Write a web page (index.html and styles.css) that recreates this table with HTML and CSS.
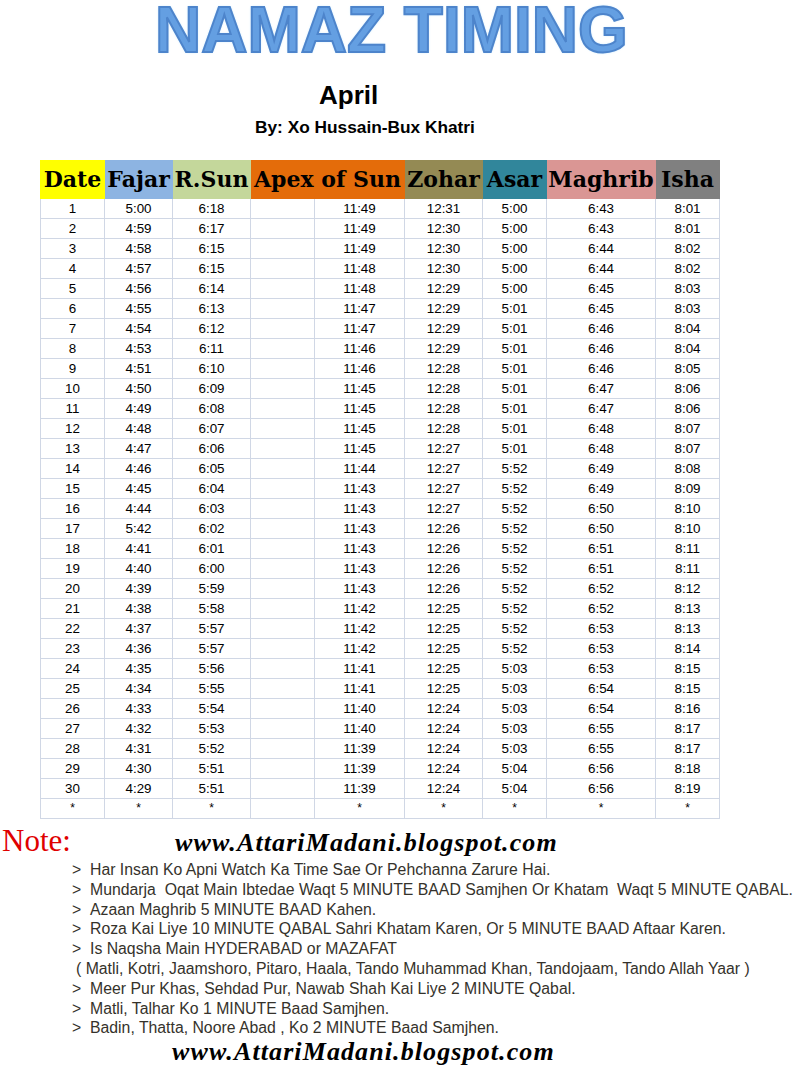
FILE: index.html
```html
<!DOCTYPE html>
<html>
<head>
<meta charset="utf-8">
<link rel="stylesheet" href="styles.css">
</head>
<body>
<div class="page">
  <h1 class="title">NAMAZ TIMING</h1>
  <div class="month">April</div>
  <div class="author">By: Xo Hussain-Bux Khatri</div>

  <table class="timing">
    <colgroup>
      <col class="c-date"><col class="c-fajar"><col class="c-rsun"><col class="c-gap"><col class="c-apex"><col class="c-zohar"><col class="c-asar"><col class="c-maghrib"><col class="c-isha">
    </colgroup>
    <thead>
      <tr>
        <th class="h-date">Date</th>
        <th class="h-fajar">Fajar</th>
        <th class="h-rsun">R.Sun</th>
        <th class="h-apex" colspan="2">Apex of Sun</th>
        <th class="h-zohar">Zohar</th>
        <th class="h-asar">Asar</th>
        <th class="h-maghrib">Maghrib</th>
        <th class="h-isha">Isha</th>
      </tr>
    </thead>
    <tbody>
      <tr><td>1</td><td>5:00</td><td>6:18</td><td></td><td>11:49</td><td>12:31</td><td>5:00</td><td>6:43</td><td>8:01</td></tr>
      <tr><td>2</td><td>4:59</td><td>6:17</td><td></td><td>11:49</td><td>12:30</td><td>5:00</td><td>6:43</td><td>8:01</td></tr>
      <tr><td>3</td><td>4:58</td><td>6:15</td><td></td><td>11:49</td><td>12:30</td><td>5:00</td><td>6:44</td><td>8:02</td></tr>
      <tr><td>4</td><td>4:57</td><td>6:15</td><td></td><td>11:48</td><td>12:30</td><td>5:00</td><td>6:44</td><td>8:02</td></tr>
      <tr><td>5</td><td>4:56</td><td>6:14</td><td></td><td>11:48</td><td>12:29</td><td>5:00</td><td>6:45</td><td>8:03</td></tr>
      <tr><td>6</td><td>4:55</td><td>6:13</td><td></td><td>11:47</td><td>12:29</td><td>5:01</td><td>6:45</td><td>8:03</td></tr>
      <tr><td>7</td><td>4:54</td><td>6:12</td><td></td><td>11:47</td><td>12:29</td><td>5:01</td><td>6:46</td><td>8:04</td></tr>
      <tr><td>8</td><td>4:53</td><td>6:11</td><td></td><td>11:46</td><td>12:29</td><td>5:01</td><td>6:46</td><td>8:04</td></tr>
      <tr><td>9</td><td>4:51</td><td>6:10</td><td></td><td>11:46</td><td>12:28</td><td>5:01</td><td>6:46</td><td>8:05</td></tr>
      <tr><td>10</td><td>4:50</td><td>6:09</td><td></td><td>11:45</td><td>12:28</td><td>5:01</td><td>6:47</td><td>8:06</td></tr>
      <tr><td>11</td><td>4:49</td><td>6:08</td><td></td><td>11:45</td><td>12:28</td><td>5:01</td><td>6:47</td><td>8:06</td></tr>
      <tr><td>12</td><td>4:48</td><td>6:07</td><td></td><td>11:45</td><td>12:28</td><td>5:01</td><td>6:48</td><td>8:07</td></tr>
      <tr><td>13</td><td>4:47</td><td>6:06</td><td></td><td>11:45</td><td>12:27</td><td>5:01</td><td>6:48</td><td>8:07</td></tr>
      <tr><td>14</td><td>4:46</td><td>6:05</td><td></td><td>11:44</td><td>12:27</td><td>5:52</td><td>6:49</td><td>8:08</td></tr>
      <tr><td>15</td><td>4:45</td><td>6:04</td><td></td><td>11:43</td><td>12:27</td><td>5:52</td><td>6:49</td><td>8:09</td></tr>
      <tr><td>16</td><td>4:44</td><td>6:03</td><td></td><td>11:43</td><td>12:27</td><td>5:52</td><td>6:50</td><td>8:10</td></tr>
      <tr><td>17</td><td>5:42</td><td>6:02</td><td></td><td>11:43</td><td>12:26</td><td>5:52</td><td>6:50</td><td>8:10</td></tr>
      <tr><td>18</td><td>4:41</td><td>6:01</td><td></td><td>11:43</td><td>12:26</td><td>5:52</td><td>6:51</td><td>8:11</td></tr>
      <tr><td>19</td><td>4:40</td><td>6:00</td><td></td><td>11:43</td><td>12:26</td><td>5:52</td><td>6:51</td><td>8:11</td></tr>
      <tr><td>20</td><td>4:39</td><td>5:59</td><td></td><td>11:43</td><td>12:26</td><td>5:52</td><td>6:52</td><td>8:12</td></tr>
      <tr><td>21</td><td>4:38</td><td>5:58</td><td></td><td>11:42</td><td>12:25</td><td>5:52</td><td>6:52</td><td>8:13</td></tr>
      <tr><td>22</td><td>4:37</td><td>5:57</td><td></td><td>11:42</td><td>12:25</td><td>5:52</td><td>6:53</td><td>8:13</td></tr>
      <tr><td>23</td><td>4:36</td><td>5:57</td><td></td><td>11:42</td><td>12:25</td><td>5:52</td><td>6:53</td><td>8:14</td></tr>
      <tr><td>24</td><td>4:35</td><td>5:56</td><td></td><td>11:41</td><td>12:25</td><td>5:03</td><td>6:53</td><td>8:15</td></tr>
      <tr><td>25</td><td>4:34</td><td>5:55</td><td></td><td>11:41</td><td>12:25</td><td>5:03</td><td>6:54</td><td>8:15</td></tr>
      <tr><td>26</td><td>4:33</td><td>5:54</td><td></td><td>11:40</td><td>12:24</td><td>5:03</td><td>6:54</td><td>8:16</td></tr>
      <tr><td>27</td><td>4:32</td><td>5:53</td><td></td><td>11:40</td><td>12:24</td><td>5:03</td><td>6:55</td><td>8:17</td></tr>
      <tr><td>28</td><td>4:31</td><td>5:52</td><td></td><td>11:39</td><td>12:24</td><td>5:03</td><td>6:55</td><td>8:17</td></tr>
      <tr><td>29</td><td>4:30</td><td>5:51</td><td></td><td>11:39</td><td>12:24</td><td>5:04</td><td>6:56</td><td>8:18</td></tr>
      <tr><td>30</td><td>4:29</td><td>5:51</td><td></td><td>11:39</td><td>12:24</td><td>5:04</td><td>6:56</td><td>8:19</td></tr>
      <tr class="stars"><td>*</td><td>*</td><td>*</td><td></td><td>*</td><td>*</td><td>*</td><td>*</td><td>*</td></tr>
    </tbody>
  </table>

  <div class="note-head">
    <span class="note-label">Note:</span>
    <span class="site site-top">www.AttariMadani.blogspot.com</span>
  </div>

  <ul class="notes">
    <li><span class="mark">&gt;</span><span class="txt">Har Insan Ko Apni Watch Ka Time Sae Or Pehchanna Zarure Hai.</span></li>
    <li><span class="mark">&gt;</span><span class="txt">Mundarja  Oqat Main Ibtedae Waqt 5 MINUTE BAAD Samjhen Or Khatam  Waqt 5 MINUTE QABAL.</span></li>
    <li><span class="mark">&gt;</span><span class="txt">Azaan Maghrib 5 MINUTE BAAD Kahen.</span></li>
    <li><span class="mark">&gt;</span><span class="txt">Roza Kai Liye 10 MINUTE QABAL Sahri Khatam Karen, Or 5 MINUTE BAAD Aftaar Karen.</span></li>
    <li><span class="mark">&gt;</span><span class="txt">Is Naqsha Main HYDERABAD or MAZAFAT</span></li>
    <li class="sub"><span class="txt">( Matli, Kotri, Jaamshoro, Pitaro, Haala, Tando Muhammad Khan, Tandojaam, Tando Allah Yaar )</span></li>
    <li><span class="mark">&gt;</span><span class="txt">Meer Pur Khas, Sehdad Pur, Nawab Shah Kai Liye 2 MINUTE Qabal.</span></li>
    <li><span class="mark">&gt;</span><span class="txt">Matli, Talhar Ko 1 MINUTE Baad Samjhen.</span></li>
    <li><span class="mark">&gt;</span><span class="txt">Badin, Thatta, Noore Abad , Ko 2 MINUTE Baad Samjhen.</span></li>
  </ul>

  <div class="site site-bottom">www.AttariMadani.blogspot.com</div>
</div>
</body>
</html>
```

FILE: styles.css
```css
html, body {
  margin: 0;
  padding: 0;
  background: #ffffff;
}

.page {
  width: 801px;
  font-family: "Liberation Sans", Arial, sans-serif;
  color: #000;
}

.title {
  margin: 0;
  padding-left: 155px;
  font-family: "Liberation Sans", Arial, sans-serif;
  font-weight: bold;
  font-size: 64px;
  line-height: 60px;
  height: 60px;
  color: #649fe2;
  -webkit-text-stroke: 2px #4d84cb;
  text-shadow: 0 0 1px #9ad6ff, 0 0 3px #a8dcff;
}

.month {
  margin-top: 20px;
  padding-left: 319px;
  font-weight: bold;
  font-size: 26px;
  line-height: 30px;
  height: 30px;
}

.author {
  margin-top: 7px;
  padding-left: 255px;
  font-weight: bold;
  font-size: 17.3px;
  line-height: 20px;
  height: 20px;
}

.timing {
  margin-top: 23px;
  margin-left: 40px;
  border-collapse: collapse;
  table-layout: fixed;
  width: 680px;
}

.c-date { width: 64px; }
.c-fajar { width: 68px; }
.c-rsun { width: 78px; }
.c-gap { width: 64px; }
.c-apex { width: 90px; }
.c-zohar { width: 78px; }
.c-asar { width: 64px; }
.c-maghrib { width: 109px; }
.c-isha { width: 64px; }

.timing th {
  height: 37px;
  padding: 0;
  font-family: "DejaVu Serif", "Liberation Serif", serif;
  font-weight: bold;
  font-size: 22px;
  line-height: 37px;
  text-align: center;
  white-space: nowrap;
  overflow: hidden;
  color: #000;
}

.h-date { background: #ffff00; border: 1px solid #ffff00; }
.h-fajar { background: #8db4e2; border: 1px solid #8db4e2; }
.h-rsun { background: #c4d79b; border: 1px solid #c4d79b; }
.h-apex { background: #e46c0a; border: 1px solid #e46c0a; }
.h-zohar { background: #948a54; border: 1px solid #948a54; }
.h-asar { background: #31869b; border: 1px solid #31869b; }
.h-maghrib { background: #da9694; border: 1px solid #da9694; }
.h-isha { background: #808080; border: 1px solid #808080; text-align: left; padding-left: 2px; }

.timing td {
  height: 19px;
  padding: 0;
  border: 1px solid #d0d7e5;
  font-family: "Liberation Sans", Arial, sans-serif;
  font-size: 13.4px;
  line-height: 19px;
  text-align: center;
  color: #000;
}

.stars td {
  font-size: 12px;
}

.note-head {
  margin-top: 4px;
  display: flex;
  align-items: baseline;
  height: 36px;
}

.note-label {
  padding-left: 2px;
  width: 173px;
  font-family: "Liberation Serif", "Times New Roman", serif;
  font-size: 31px;
  line-height: 36px;
  color: #e00000;
}

.site {
  font-family: "Liberation Serif", "Times New Roman", serif;
  font-style: italic;
  font-weight: bold;
  font-size: 26px;
  letter-spacing: 1.1px;
  color: #000;
}

.site-top {
  line-height: 36px;
}

.notes {
  list-style: none;
  margin: 1px 0 0 0;
  padding: 0 0 0 72px;
  font-size: 15.8px;
  line-height: 19.8px;
  color: #35322b;
}

.notes li {
  display: flex;
  white-space: pre;
}

.notes .mark {
  width: 18px;
  flex: none;
}

.notes .sub {
  padding-left: 4px;
}

.site-bottom {
  margin-top: 1px;
  padding-left: 172px;
  line-height: 26px;
}
```
